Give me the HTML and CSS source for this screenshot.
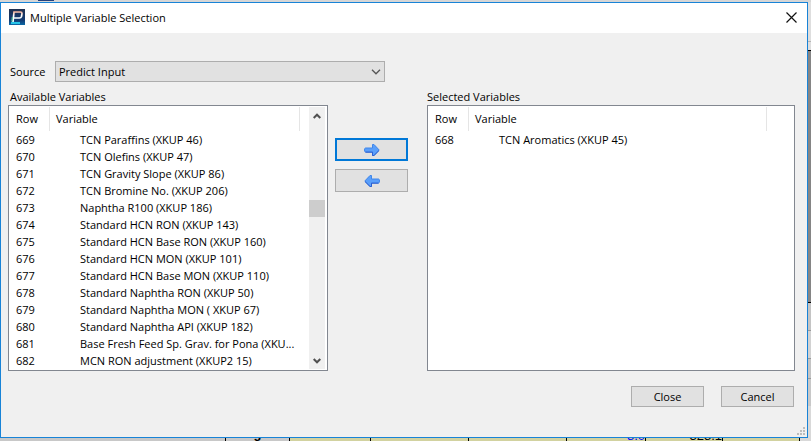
FILE: index.html
```
<!DOCTYPE html>
<html lang="en">
<head>
<meta charset="utf-8">
<title>Multiple Variable Selection</title>
<link rel="stylesheet" href="styles.css">
</head>
<body>
<div class="desktop">
  <div class="strip-top"><span class="strip-tab"></span></div>
  <main class="dialog">
    <header class="titlebar">
      <svg class="logo" width="16" height="16" viewBox="0 0 16 16" aria-hidden="true">
        <defs>
          <linearGradient id="logo-bg" x1="0" y1="0" x2="0" y2="1"><stop offset="0" stop-color="#20304f"/><stop offset=".7" stop-color="#123a73"/><stop offset="1" stop-color="#0b6aa8"/></linearGradient>
          <linearGradient id="logo-line" gradientUnits="userSpaceOnUse" x1="0" y1="2" x2="0" y2="13"><stop offset="0" stop-color="#f6a88c"/><stop offset=".4" stop-color="#fff"/><stop offset="1" stop-color="#f4ffff"/></linearGradient>
        </defs>
        <rect width="16" height="16" fill="url(#logo-bg)"/>
        <path d="M2 14h9" stroke="#27c4e8" stroke-width="2"/>
        <path d="M4 13L5 3H11.500Q13 3 13 4.500L12.500 7.500Q12 9 10.500 9H5" fill="none" stroke="url(#logo-line)" stroke-width="1.700"/>
        <path d="M3.300 8L2.800 12.500" stroke="#58d8a0"/>
      </svg>
      <h1 class="title">Multiple Variable Selection</h1>
      <button class="close" type="button" aria-label="Close window">
        <svg width="11" height="11" viewBox="0 0 11 11"><path d="M.5.5l10 10M10.500.5l-10 10" stroke="#111" stroke-width="1.200"/></svg>
      </button>
    </header>
    <div class="content">
      <div class="source">
        <label for="source">Source</label>
        <div class="select-wrap">
          <select id="source"><option>Predict Input</option></select>
          <svg class="chevron" width="10" height="6" viewBox="0 0 10 6" aria-hidden="true"><path d="M1 .8l4 4 4-4" fill="none" stroke="#555" stroke-width="1.300"/></svg>
        </div>
      </div>
      <div class="panels">
        <section class="panel">
          <h2 class="caption">Available Variables</h2>
          <div class="list">
            <table class="table">
              <thead><tr><th class="col-row">Row</th><th>Variable</th></tr></thead>
              <tbody>
                <tr><td>669</td><td>TCN Paraffins (XKUP 46)</td></tr>
                <tr><td>670</td><td>TCN Olefins (XKUP 47)</td></tr>
                <tr><td>671</td><td>TCN Gravity Slope (XKUP 86)</td></tr>
                <tr><td>672</td><td>TCN Bromine No. (XKUP 206)</td></tr>
                <tr><td>673</td><td>Naphtha R100 (XKUP 186)</td></tr>
                <tr><td>674</td><td>Standard HCN RON (XKUP 143)</td></tr>
                <tr><td>675</td><td>Standard HCN Base RON (XKUP 160)</td></tr>
                <tr><td>676</td><td>Standard HCN MON (XKUP 101)</td></tr>
                <tr><td>677</td><td>Standard HCN Base MON (XKUP 110)</td></tr>
                <tr><td>678</td><td>Standard Naphtha RON (XKUP 50)</td></tr>
                <tr><td>679</td><td>Standard Naphtha MON ( XKUP 67)</td></tr>
                <tr><td>680</td><td>Standard Naphtha API (XKUP 182)</td></tr>
                <tr><td>681</td><td>Base Fresh Feed Sp. Grav. for Pona (XKU...</td></tr>
                <tr><td>682</td><td>MCN RON adjustment (XKUP2 15)</td></tr>
              </tbody>
            </table>
            <div class="scrollbar">
              <button type="button" aria-label="Scroll up"><svg width="8" height="6" viewBox="0 0 8 6"><path d="M.7 5L4 1.700 7.300 5" fill="none" stroke="#505050" stroke-width="2"/></svg></button>
              <div class="track"><div class="thumb"></div></div>
              <button type="button" aria-label="Scroll down"><svg width="8" height="6" viewBox="0 0 8 6"><path d="M.7 1L4 4.300 7.300 1" fill="none" stroke="#505050" stroke-width="2"/></svg></button>
            </div>
          </div>
        </section>
        <div class="movers">
          <button class="button move primary" type="button" aria-label="Add variable">
            <svg width="16" height="14" viewBox="0 0 16 14"><path d="M1.500 5H8.500V1.500H10L15.200 7 10 12.500H8.500V9H1.500Q.5 9 .5 7T1.500 5z" fill="#5a9ffa" stroke="#3f86ea"/><path d="M1.500 9.200H8.500V12.500H10L15 7.600" fill="none" stroke="#2d5fd0"/></svg>
          </button>
          <button class="button move" type="button" aria-label="Remove variable">
            <svg width="16" height="14" viewBox="0 0 16 14"><path d="M14.500 5H7.500V1.500H6L.8 7 6 12.500H7.500V9H14.500Q15.500 9 15.500 7T14.500 5z" fill="#5a9ffa" stroke="#3f86ea"/><path d="M14.500 9.200H7.500V12.500H6L1 7.600" fill="none" stroke="#2d5fd0"/></svg>
          </button>
        </div>
        <section class="panel">
          <h2 class="caption">Selected Variables</h2>
          <div class="list list-selected">
            <table class="table">
              <thead><tr><th class="col-row">Row</th><th>Variable</th></tr></thead>
              <tbody><tr><td>668</td><td>TCN Aromatics (XKUP 45)</td></tr></tbody>
            </table>
          </div>
        </section>
      </div>
      <footer class="actions">
        <button class="button" type="button">Close</button>
        <button class="button" type="button">Cancel</button>
      </footer>
    </div>
    <svg class="grip" width="8" height="8" viewBox="0 0 8 8" aria-hidden="true"><path d="M6 0h2v2H6zM3 3h2v2H3zM6 3h2v2H6zM0 6h2v2H0zM3 6h2v2H3zM6 6h2v2H6z" fill="#bcbcbc"/></svg>
  </main>
  <div class="strip-right"></div>
  <div class="sheet">
    <span class="cell blank"></span><span class="cell head">g</span><span class="cell"></span><span class="cell"></span><span class="cell"></span><span class="cell number input">8.0</span><span class="cell number">328.1</span><span class="cell"></span><span class="rest"></span>
  </div>
</div>
</body>
</html>
```
FILE: styles.css
```
* { box-sizing: border-box; }

body {
  margin: 0;
  color: #000;
  font: 11px/17px "Open Sans", "Noto Sans", sans-serif;
}

.desktop {
  display: grid;
  grid-template: 2px 1fr 3px / 1fr 3px;
  height: 100vh;
  overflow: hidden;
}

.strip-top {
  grid-column: 1 / -1;
  padding-left: 38px;
  background: #d6d6d6;
}

.strip-tab {
  display: block;
  width: 16px;
  height: 1px;
  background: #24407c;
}

.strip-right {
  background: linear-gradient(#dedede 0 39px, #b5b5b5 39px 40px, #dedede 40px 48px, #000 48px 49px, #858585 49px 300px, #000 300px 301px, #c4c4c4 301px 328px, #999 328px 329px, #d2d2d2 329px 356px, #999 356px 357px, #c4c4c4 357px 376px, #999 376px 377px, #c8c8c8 377px 404px, #d9d9d9 404px);
}

.dialog {
  position: relative;
  display: flex;
  flex-direction: column;
  min-width: 0;
  border: 1px solid #1883d7;
  background: #f0f0f0;
}

.titlebar {
  display: flex;
  align-items: center;
  height: 30px;
  padding: 0 10px 2px 8px;
  background: #fff;
}

.title {
  flex: 1;
  margin: 0 0 0 5px;
  font-size: 11px;
  font-weight: 400;
}

.close {
  display: flex;
  padding: 0;
  border: 0;
  background: none;
}

.content { padding: 28px 12px 0 7px; }

.source {
  display: flex;
  align-items: center;
  padding-left: 2px;
}

.source label { width: 45px; }

.select-wrap {
  position: relative;
  width: 42%;
}

.select-wrap select {
  appearance: none;
  display: block;
  width: 100%;
  height: 21px;
  padding: 0 3px;
  border: 1px solid #adadad;
  border-radius: 0;
  background: #e1e1e1;
  color: #000;
  font: inherit;
}

.chevron {
  position: absolute;
  top: 8px;
  right: 4px;
  pointer-events: none;
}

.panels {
  display: grid;
  grid-template-columns: 20fr 99px 23fr;
}

.panel { min-width: 0; }

.caption {
  margin: 0;
  padding: 7px 0 0 2px;
  font-size: 11px;
  line-height: 16px;
  font-weight: 400;
}

.panel:last-child .caption { padding-left: 0; }

.list {
  display: flex;
  height: 266px;
  padding: 1px;
  border: 1px solid #828790;
  background: #fff;
}

.list-selected { padding-right: 27px; }

.table {
  flex: 1;
  align-self: flex-start;
  min-width: 0;
  table-layout: fixed;
  border-collapse: separate;
  border-spacing: 0;
}

.table th {
  height: 24px;
  padding: 0 6px 1px;
  border-right: 1px solid #e5e5e5;
  font-weight: 400;
  text-align: left;
}

.table td {
  height: 17px;
  padding: 0 0 0 30px;
  white-space: nowrap;
}

.table .col-row { width: 40px; }

.table td:first-child { padding-left: 6px; }

.scrollbar {
  display: flex;
  flex-direction: column;
  width: 16px;
  margin: 0 1px 0 9px;
  background: #f0f0f0;
}

.scrollbar button {
  display: flex;
  align-items: center;
  justify-content: center;
  height: 17px;
  padding: 0;
  border: 0;
  background: none;
}

.track {
  flex: 1;
  padding-top: 76px;
}

.thumb {
  height: 17px;
  background: #cdcdcd;
}

.movers {
  display: flex;
  flex-direction: column;
  gap: 8px;
  padding: 56px 0 0 7px;
}

.button {
  width: 73px;
  height: 21px;
  padding: 0;
  border: 1px solid #adadad;
  background: #e1e1e1;
  color: #000;
  font: inherit;
}

.move {
  display: flex;
  align-items: center;
  justify-content: center;
  height: 23px;
}

.primary { border: 2px solid #0078d7; }

.actions {
  display: flex;
  justify-content: flex-end;
  gap: 17px;
  padding: 15px 1px 0 0;
}

.grip {
  position: absolute;
  right: 2px;
  bottom: 2px;
}

.sheet {
  grid-column: 1 / -1;
  display: grid;
  grid-template-columns: 226fr 64fr 81fr 98fr 98fr 79fr 77fr 77fr 11fr;
  overflow: hidden;
  background: #d2d2a0;
}

.cell {
  display: flex;
  flex-direction: column;
  justify-content: flex-end;
  height: 3px;
  overflow: hidden;
  border-right: 1px solid #000;
  font: 13px/11px "Liberation Sans", Arial, sans-serif;
}

.blank, .head { background: #c8c8c8; }

.head {
  font-weight: 700;
  line-height: 15px;
  text-align: center;
}

.number { text-align: right; }

.input { color: #00f; }

.rest { background: #d9d9d9; }
```
